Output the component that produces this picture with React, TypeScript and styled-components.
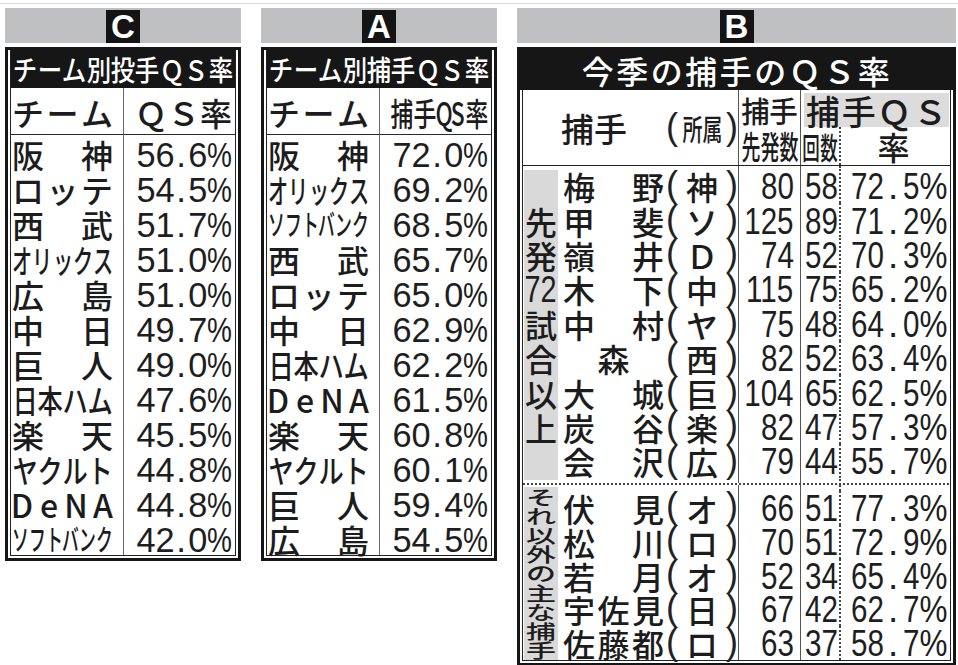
import React from 'react';
import styled, { createGlobalStyle } from 'styled-components';

const JP = `"Noto Sans CJK JP", "Noto Sans", sans-serif`;
const NUM = `"Liberation Sans", Arial, sans-serif`;
const DIGIT = 0.556;
const PCT = 0.889;

const GlobalStyle = createGlobalStyle`
	html, body {
		margin: 0;
		padding: 0;
		background: #fff;
	}
	body {
		font-family: ${JP};
		color: #1c1c1c;
	}
	* {
		box-sizing: border-box;
	}
`;

const Page = styled.div`
	width: 958px;
	height: 665px;
	overflow: hidden;
	padding-top: 3px;
`;

const Sheet = styled.div`
	display: flex;
	align-items: flex-start;
	gap: 20px;
	padding: 4px 0 0 5px;
	border-top: 1px solid #d8d8d8;
`;

const Panel = styled.section<{ $w: number }>`
	flex: none;
	width: ${(p) => p.$w}px;
	display: flex;
	flex-direction: column;
	gap: 4px;
`;

const LetterBar = styled.div`
	height: 35px;
	background: #bec0c2;
	display: flex;
	justify-content: center;
	align-items: flex-end;
`;

const LetterBox = styled.div`
	width: 34px;
	height: 33px;
	background: #141414;
	color: #fff;
	font: 700 33px/34px ${NUM};
	text-align: center;
`;

const Frame = styled.div`
	border: 3px solid #161616;
	padding: 2px;
	display: flex;
	flex-direction: column;
`;

const Inner = styled.div`
	border: 1px solid #222;
	border-top: 0;
	margin-top: -2px;
`;

const Title = styled.div<{ $h: number; $wide?: boolean }>`
	height: ${(p) => p.$h}px;
	background: #161616;
	color: #fff;
	display: flex;
	align-items: center;
	justify-content: center;
	padding: 0 2px 0 ${(p) => (p.$wide ? '3px' : '2px')};
	margin: ${(p) => (p.$wide ? '-2px -2px 0' : '0')};
	font-size: 32px;
	line-height: 1;
	font-weight: 500;
	letter-spacing: ${(p) => (p.$wide ? '2.5px' : '0')};
`;

/* ---------- spread / squeeze text ---------- */

const SpreadBox = styled.span<{ $w: number; $size: number; $center: boolean }>`
	flex: none;
	display: flex;
	align-items: center;
	justify-content: ${(p) => (p.$center ? 'center' : 'space-between')};
	width: ${(p) => p.$w}px;
	font-size: ${(p) => p.$size}px;
	line-height: 1;
	font-weight: 500;
`;

const Slot = styled.span<{ $w: number }>`
	flex: none;
	display: inline-flex;
	justify-content: center;
	width: ${(p) => p.$w}px;
`;

const Squash = styled.span<{ $s: number; $sy?: number }>`
	display: inline-block;
	white-space: pre;
	transform: scale(${(p) => p.$s}, ${(p) => p.$sy ?? 1});
`;

const wide = (c: string) => /[^\x00-\x7f]/.test(c);

const Spread: React.FC<{ text: string; width: number; size: number }> = ({
	text,
	width,
	size,
}) => {
	const chars = Array.from(text);
	const nat = chars.map((c) => (wide(c) ? size : size * 0.62));
	const total = nat.reduce((a, b) => a + b, 0);
	const s = total > width ? width / total : 1;
	return (
		<SpreadBox $w={width} $size={size} $center={chars.length === 1}>
			{chars.map((c, i) => (
				<Slot key={i} $w={nat[i] * s}>
					<Squash $s={s}>{c}</Squash>
				</Slot>
			))}
		</SpreadBox>
	);
};

/* ---------- numbers ---------- */

const NumRun = styled.span<{ $size: number }>`
	display: inline-flex;
	align-items: center;
	font-family: ${NUM};
	font-size: ${(p) => p.$size}px;
	line-height: 1;
	color: #1e1e1e;
`;

const Digits: React.FC<{ text: string; size: number; s: number }> = ({ text, size, s }) => (
	<Slot $w={text.length * DIGIT * size * s}>
		<Squash $s={s}>{text}</Squash>
	</Slot>
);

const Num: React.FC<{ text: string; size: number; s: number }> = ({ text, size, s }) => (
	<NumRun $size={size}>
		<Digits text={text} size={size} s={s} />
	</NumRun>
);

const Rate: React.FC<{ v: string; size: number; s: number; dot: number; pct: number }> = ({
	v,
	size,
	s,
	dot,
	pct,
}) => {
	const [i, d] = v.replace('%', '').split('.');
	return (
		<NumRun $size={size}>
			<Digits text={i} size={size} s={s} />
			<Slot $w={dot}>.</Slot>
			<Digits text={d} size={size} s={s} />
			<Slot $w={PCT * size * pct}>
				<Squash $s={pct}>%</Squash>
			</Slot>
		</NumRun>
	);
};

/* ---------- team tables (C / A) ---------- */

const TeamGrid = styled.div`
	display: grid;
	grid-template-columns: 113px 1fr;
	grid-auto-rows: 35px;
	grid-template-rows: 47px;
`;

const HeadCell = styled.div<{ $first?: boolean }>`
	min-height: 0;
	border-bottom: 1px solid #2a2a2a;
	border-right: ${(p) => (p.$first ? '1px solid #6a6a6a' : '0')};
	display: flex;
	align-items: center;
	padding: 2px 0 0 ${(p) => (p.$first ? '1px' : '11px')};
`;

const TeamCell = styled.div<{ $first?: boolean }>`
	min-height: 0;
	border-right: ${(p) => (p.$first ? '1px solid #6a6a6a' : '0')};
	display: flex;
	align-items: center;
	justify-content: ${(p) => (p.$first ? 'flex-start' : 'flex-end')};
	padding: ${(p) => (p.$first ? '2px 0 0 1px' : '3px 3px 0 0')};
`;

const teamSize = (name: string) => (Array.from(name).length >= 6 ? 29 : 32);

interface TeamTableProps {
	letter: string;
	title: string;
	rateHead: string;
	rows: [string, string][];
}

const TeamTable: React.FC<TeamTableProps> = ({ letter, title, rateHead, rows }) => (
	<Panel $w={236}>
		<LetterBar>
			<LetterBox>{letter}</LetterBox>
		</LetterBar>
		<Frame>
			<Inner>
				<Title $h={38}>
					<Spread text={title} width={220} size={28} />
				</Title>
				<TeamGrid>
					<HeadCell $first>
						<Spread text="チーム" width={101} size={32} />
					</HeadCell>
					<HeadCell>
						<Spread text={rateHead} width={97} size={32} />
					</HeadCell>
					{rows.map(([name, rate]) => (
						<React.Fragment key={name}>
							<TeamCell $first>
								<Spread text={name} width={101} size={teamSize(name)} />
							</TeamCell>
							<TeamCell>
								<Rate v={rate} size={35} s={0.98} dot={14} pct={0.8} />
							</TeamCell>
						</React.Fragment>
					))}
				</TeamGrid>
			</Inner>
		</Frame>
	</Panel>
);

/* ---------- catcher table (B) ---------- */

const dotsV = `linear-gradient(to bottom, #444 50%, transparent 50%) right top / 2px 4px repeat-y`;

const BInner = styled.div`
	border: 1px solid #222;
	border-top: 0;
`;

const BHead = styled.div`
	display: grid;
	grid-template-columns: 216px 62px 40px 1fr;
	grid-template-rows: 37px 38px;
	border-bottom: 1px solid #222;
`;

const NameHead = styled.div`
	grid-row: span 2;
	border-right: 1px solid #555;
	display: flex;
	align-items: center;
	padding: 2px 0 0 38px;
`;

const HeadText = styled.span<{ $w: number; $size: number }>`
	flex: none;
	width: ${(p) => p.$w}px;
	font-size: ${(p) => p.$size}px;
	line-height: 1;
	font-weight: 500;
`;

const Affil = styled.span<{ $w: number }>`
	flex: none;
	width: ${(p) => p.$w}px;
	margin-left: 2px;
	display: flex;
	justify-content: space-between;
	align-items: center;
	font-size: 32px;
	line-height: 1;
	font-weight: 500;
`;

const Paren = styled.span`
	font: 400 36px/1 ${NUM};
	color: #222;
	margin-top: -3px;
`;

const StartHead = styled.div`
	grid-row: span 2;
	border-right: 1px solid #555;
	display: flex;
	flex-direction: column;
	align-items: center;
	justify-content: center;
	gap: 4px;
	padding-top: 2px;
`;

const QSTop = styled.div`
	grid-column: 3 / span 2;
	margin: 3px 1px 0 3px;
	background: #dcdcdc;
	display: flex;
	align-items: center;
	padding: 2px 0 0 2px;
`;

const CountHead = styled.div`
	background: ${dotsV};
	display: flex;
	align-items: center;
	justify-content: center;
	padding-right: 2px;
`;

const RateHead = styled.div`
	display: flex;
	align-items: center;
	justify-content: center;
	font-size: 32px;
	line-height: 1;
	font-weight: 500;
	padding-right: 4px;
`;

const Group = styled.div`
	display: flex;
`;

const Label = styled.div<{ $m: string }>`
	flex: none;
	width: 34px;
	margin: ${(p) => p.$m};
	background: #d9d9d9;
	display: flex;
	flex-direction: column;
`;

const LabelSlot = styled.div<{ $h: number; $size: number }>`
	flex: none;
	height: ${(p) => p.$h}px;
	display: flex;
	align-items: center;
	justify-content: center;
	font-size: ${(p) => p.$size}px;
	line-height: 1;
	font-weight: 500;
`;

const Rows = styled.div`
	flex: 1;
	display: flex;
	flex-direction: column;
`;

const Row = styled.div<{ $h: number }>`
	flex: none;
	display: grid;
	grid-template-columns: 179px 62px 40px 1fr;
	grid-template-rows: ${(p) => p.$h}px;
	height: ${(p) => p.$h}px;
`;

const NameCell = styled.div`
	min-height: 0;
	border-right: 1px solid #555;
	display: flex;
	align-items: center;
	padding-left: 3px;
`;

const NumCell = styled.div<{ $pr: number; $kind?: 'line' | 'dots' }>`
	min-height: 0;
	display: flex;
	align-items: center;
	justify-content: flex-end;
	padding: 1px ${(p) => p.$pr}px 0 0;
	border-right: ${(p) => (p.$kind === 'line' ? '1px solid #555' : '0')};
	background: ${(p) => (p.$kind === 'dots' ? dotsV : 'none')};
`;

const DotRule = styled.div`
	height: 2px;
	background: linear-gradient(to right, #444 50%, transparent 50%) left top / 4px 2px repeat-x;
`;

type Catcher = [string, string, number, number, string];

const STARTERS: Catcher[] = [
	['梅野', '神', 80, 58, '72.5%'],
	['甲斐', 'ソ', 125, 89, '71.2%'],
	['嶺井', 'Ｄ', 74, 52, '70.3%'],
	['木下', '中', 115, 75, '65.2%'],
	['中村', 'ヤ', 75, 48, '64.0%'],
	['森', '西', 82, 52, '63.4%'],
	['大城', '巨', 104, 65, '62.5%'],
	['炭谷', '楽', 82, 47, '57.3%'],
	['会沢', '広', 79, 44, '55.7%'],
];

const OTHERS: Catcher[] = [
	['伏見', 'オ', 66, 51, '77.3%'],
	['松川', 'ロ', 70, 51, '72.9%'],
	['若月', 'オ', 52, 34, '65.4%'],
	['宇佐見', '日', 67, 42, '62.7%'],
	['佐藤都', 'ロ', 63, 37, '58.7%'],
];

const Spacer: React.FC<{ h: number }> = ({ h }) => (
	<Row $h={h}>
		<NameCell />
		<NumCell $pr={0} $kind="line" />
		<NumCell $pr={0} $kind="dots" />
		<NumCell $pr={0} />
	</Row>
);

const CatcherRow: React.FC<{ c: Catcher; h: number }> = ({ c, h }) => {
	const [name, team, starts, qs, rate] = c;
	return (
		<Row $h={h}>
			<NameCell>
				<Spread text={name} width={101} size={32} />
				<Affil $w={72}>
					<Paren>(</Paren>
					<span>{team}</span>
					<Paren>)</Paren>
				</Affil>
			</NameCell>
			<NumCell $pr={6} $kind="line">
				<Num text={String(starts)} size={37} s={0.8} />
			</NumCell>
			<NumCell $pr={3} $kind="dots">
				<Num text={String(qs)} size={37} s={0.8} />
			</NumCell>
			<NumCell $pr={3}>
				<Rate v={rate} size={37} s={0.8} dot={19} pct={0.85} />
			</NumCell>
		</Row>
	);
};

const STARTER_LABEL = ['', '先', '発', '72', '試', '合', '以', '上'];
const OTHER_LABEL = Array.from('それ以外の主な捕手');

const CatcherTable: React.FC = () => (
	<Panel $w={439}>
		<LetterBar>
			<LetterBox>B</LetterBox>
		</LetterBar>
		<Frame>
			<Title $h={40} $wide>
				今季の捕手のＱＳ率
			</Title>
			<BInner>
				<BHead>
					<NameHead>
						<HeadText $w={103} $size={33}>
							捕手
						</HeadText>
						<Affil $w={72}>
							<Paren>(</Paren>
							<Spread text="所属" width={40} size={29} />
							<Paren>)</Paren>
						</Affil>
					</NameHead>
					<StartHead>
						<Spread text="捕手" width={57} size={29} />
						<Spread text="先発数" width={57} size={32} />
					</StartHead>
					<QSTop>
						<Spread text="捕手ＱＳ" width={141} size={34} />
					</QSTop>
					<CountHead>
						<Spread text="回数" width={35} size={30} />
					</CountHead>
					<RateHead>率</RateHead>
				</BHead>

				<Group>
					<Label $m="4px 2px 3px 1px">
						{STARTER_LABEL.map((t, i) => (
							<LabelSlot key={i} $h={i === 0 ? 33.4 : 34.4} $size={32}>
								{t === '72' ? <Num text="72" size={37} s={0.78} /> : t}
							</LabelSlot>
						))}
					</Label>
					<Rows>
						<Spacer h={3} />
						{STARTERS.map((c) => (
							<CatcherRow key={c[0]} c={c} h={34.4} />
						))}
						<Spacer h={4.5} />
					</Rows>
				</Group>
				<DotRule />
				<Group>
					<Label $m="2px 2px 0 1px">
						{OTHER_LABEL.map((t, i) => (
							<LabelSlot key={i} $h={19.2} $size={30}>
								<Squash $s={1} $sy={0.64}>
									{t}
								</Squash>
							</LabelSlot>
						))}
					</Label>
					<Rows>
						<Spacer h={6} />
						{OTHERS.map((c) => (
							<CatcherRow key={c[0]} c={c} h={33.8} />
						))}
					</Rows>
				</Group>
			</BInner>
		</Frame>
	</Panel>
);

/* ---------- data ---------- */

const PITCHERS: [string, string][] = [
	['阪神', '56.6%'],
	['ロッテ', '54.5%'],
	['西武', '51.7%'],
	['オリックス', '51.0%'],
	['広島', '51.0%'],
	['中日', '49.7%'],
	['巨人', '49.0%'],
	['日本ハム', '47.6%'],
	['楽天', '45.5%'],
	['ヤクルト', '44.8%'],
	['DeNA', '44.8%'],
	['ソフトバンク', '42.0%'],
];

const CATCHERS: [string, string][] = [
	['阪神', '72.0%'],
	['オリックス', '69.2%'],
	['ソフトバンク', '68.5%'],
	['西武', '65.7%'],
	['ロッテ', '65.0%'],
	['中日', '62.9%'],
	['日本ハム', '62.2%'],
	['DeNA', '61.5%'],
	['楽天', '60.8%'],
	['ヤクルト', '60.1%'],
	['巨人', '59.4%'],
	['広島', '54.5%'],
];

const App: React.FC = () => (
	<>
		<GlobalStyle />
		<Page>
			<Sheet>
				<TeamTable letter="C" title="チーム別投手ＱＳ率" rateHead="ＱＳ率" rows={PITCHERS} />
				<TeamTable letter="A" title="チーム別捕手ＱＳ率" rateHead="捕手QS率" rows={CATCHERS} />
				<CatcherTable />
			</Sheet>
		</Page>
	</>
);

export default App;
